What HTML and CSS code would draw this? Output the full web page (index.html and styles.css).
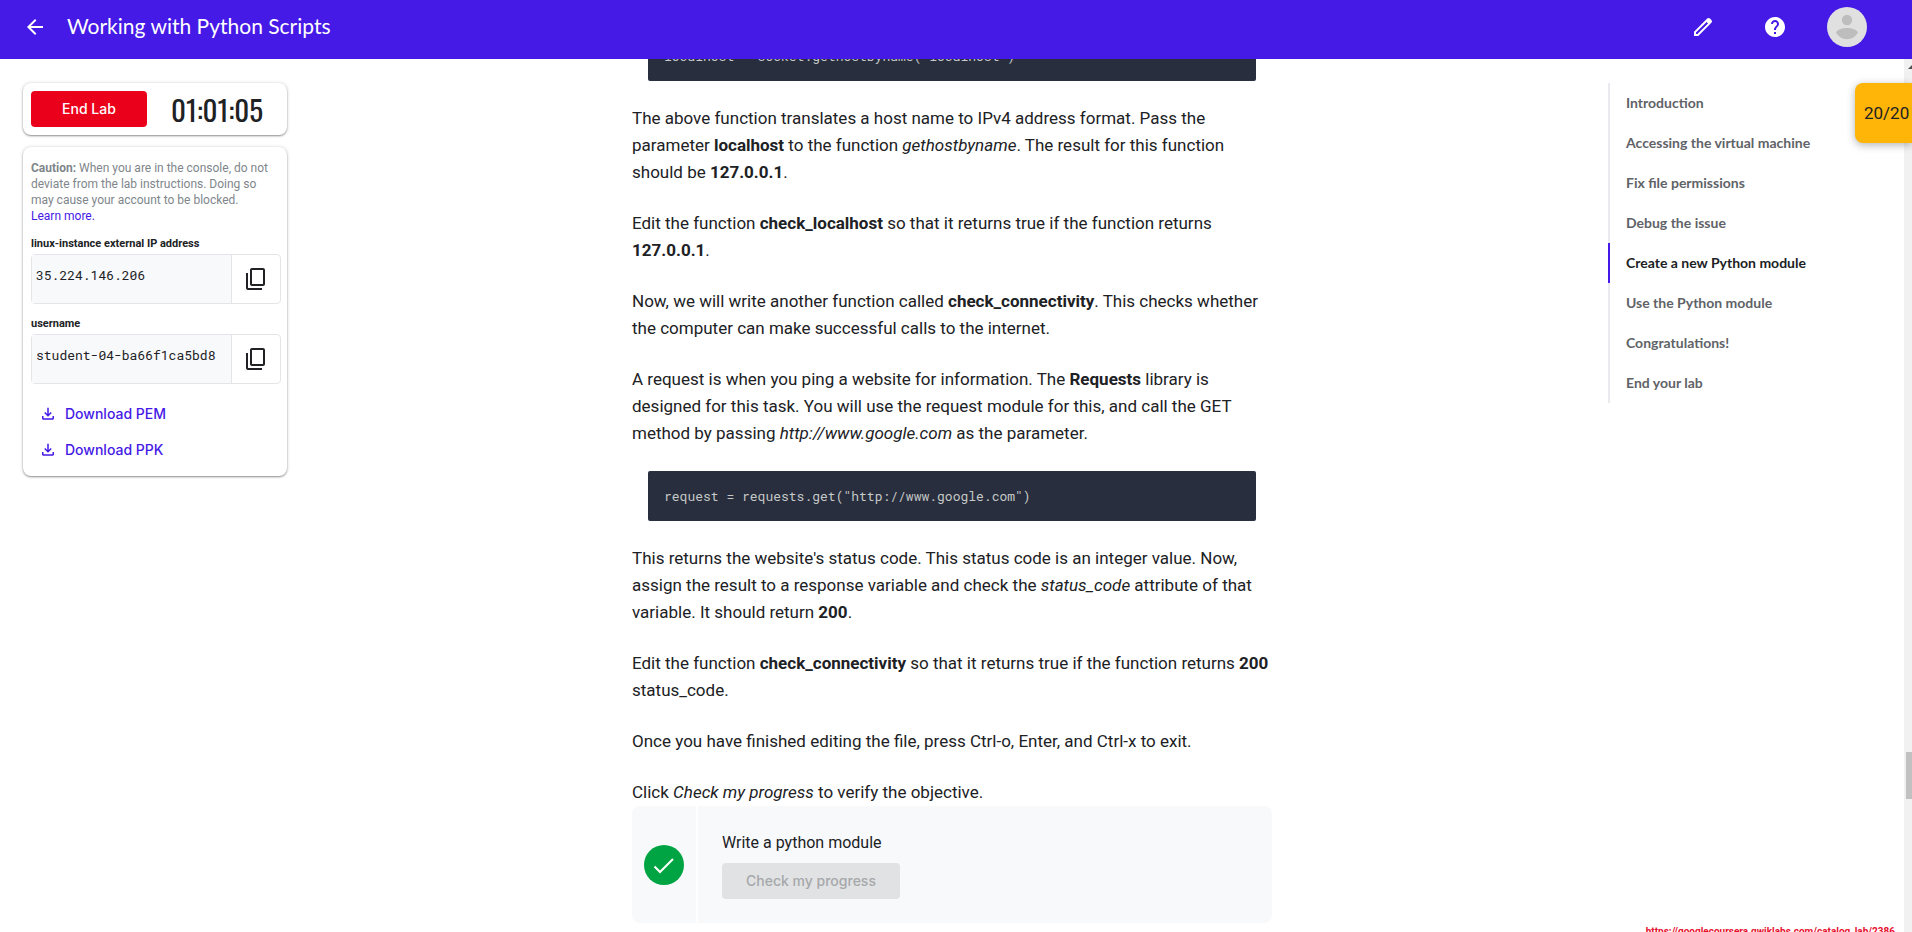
FILE: index.html
```html
<!DOCTYPE html>
<html lang="en">
<head>
<meta charset="utf-8">
<title>Working with Python Scripts</title>
<link rel="stylesheet" href="styles.css">
</head>
<body>
<header class="topbar">
  <button class="icon-button" aria-label="Back">
    <svg width="24" height="24" viewBox="0 0 24 24"><path fill="currentColor" d="M20 11H7.830l5.590-5.590L12 4l-8 8 8 8 1.410-1.410L7.830 13H20v-2z"/></svg>
  </button>
  <h1 class="title">Working with Python Scripts</h1>
  <div class="actions">
    <button class="icon-button" aria-label="Edit">
      <svg width="24" height="24" viewBox="0 0 24 24"><path fill="currentColor" fill-rule="evenodd" d="M3 21v-4.300L16.200 3.600a2 2 0 0 1 2.800 0l1.400 1.400a2 2 0 0 1 0 2.800L7.300 21zM5 19h1.400L17 8.400 15.600 7 5 17.600z"/></svg>
    </button>
    <button class="icon-button" aria-label="Help">
      <svg width="24" height="24" viewBox="0 0 24 24"><path fill="currentColor" d="M12 2C6.480 2 2 6.480 2 12s4.480 10 10 10 10-4.480 10-10S17.520 2 12 2zm1 17h-2v-2h2v2zm2.070-7.750l-.9.920C13.450 12.900 13 13.500 13 15h-2v-.5c0-1.100.450-2.100 1.170-2.830l1.240-1.260c.370-.360.590-.860.590-1.410 0-1.100-.9-2-2-2s-2 .9-2 2H8c0-2.210 1.790-4 4-4s4 1.790 4 4c0 .880-.360 1.680-.930 2.250z"/></svg>
    </button>
    <button class="icon-button" aria-label="Account">
      <svg width="40" height="40" viewBox="0 0 40 40"><circle cx="20" cy="20" r="20" fill="#e0e0e0"/><circle cx="20" cy="13" r="5.200" fill="#bdbdbd"/><path fill="#bdbdbd" d="M9 25.500c2-3.500 7-4.500 11-4.500s9 1 11 4.500c-2.500 4.300-6.500 6.700-11 6.700s-8.500-2.400-11-6.700z"/></svg>
    </button>
  </div>
</header>
<div class="page">
  <main class="layout">
    <aside class="side">
      <section class="card timer-card">
        <button class="end-button">End Lab</button>
        <time class="timer">01:01:05</time>
      </section>
      <section class="card panel">
        <p class="caution"><b>Caution:</b> When you are in the console, do not deviate from the lab instructions. Doing so may cause your account to be blocked. <a href="#">Learn more.</a></p>
        <label class="field-label" for="ip">linux-instance external IP address</label>
        <div class="field">
          <input class="field-value" id="ip" value="35.224.146.206" readonly>
          <button class="copy" aria-label="Copy IP address"><svg width="24" height="24" viewBox="0 0 24 24"><path fill="currentColor" d="M3 6H1v15c0 1.100.9 2 2 2h14v-2H3V6zM18 1H7c-1.100 0-2 .9-2 2v14c0 1.100.9 2 2 2h11c1.100 0 2-.9 2-2V3c0-1.100-.9-2-2-2zm0 16H7V3h11v14z"/></svg></button>
        </div>
        <label class="field-label" for="user">username</label>
        <div class="field">
          <input class="field-value" id="user" value="student-04-ba66f1ca5bd8" readonly>
          <button class="copy" aria-label="Copy username"><svg width="24" height="24" viewBox="0 0 24 24"><path fill="currentColor" d="M3 6H1v15c0 1.100.9 2 2 2h14v-2H3V6zM18 1H7c-1.100 0-2 .9-2 2v14c0 1.100.9 2 2 2h11c1.100 0 2-.9 2-2V3c0-1.100-.9-2-2-2zm0 16H7V3h11v14z"/></svg></button>
        </div>
        <div class="downloads">
          <a class="download" href="#"><svg width="18" height="18" viewBox="0 0 24 24"><path fill="currentColor" d="M18 16v3H6v-3H4v3c0 1.100.9 2 2 2h12c1.100 0 2-.9 2-2v-3h-2zm-1-4l-1.410-1.410L13 13.170V5h-2v8.170L8.410 10.590 7 12l5 5 5-5z"/></svg>Download PEM</a>
          <a class="download" href="#"><svg width="18" height="18" viewBox="0 0 24 24"><path fill="currentColor" d="M18 16v3H6v-3H4v3c0 1.100.9 2 2 2h12c1.100 0 2-.9 2-2v-3h-2zm-1-4l-1.410-1.410L13 13.170V5h-2v8.170L8.410 10.590 7 12l5 5 5-5z"/></svg>Download PPK</a>
        </div>
      </section>
    </aside>
    <article class="lesson">
      <pre class="code"><code>localhost = socket.gethostbyname('localhost')</code></pre>
      <p>The above function translates a host name to IPv4 address format. Pass the parameter <b>localhost</b> to the function <em>gethostbyname</em>. The result for this function should be <b>127.0.0.1</b>.</p>
      <p>Edit the function <b>check_localhost</b> so that it returns true if the function returns <b>127.0.0.1</b>.</p>
      <p>Now, we will write another function called <b>check_connectivity</b>. This checks whether the computer can make successful calls to the internet.</p>
      <p>A request is when you ping a website for information. The <b>Requests</b> library is designed for this task. You will use the request module for this, and call the GET method by passing <em>http://www.google.com</em> as the parameter.</p>
      <pre class="code"><code>request = requests.get("http://www.google.com")</code></pre>
      <p>This returns the website's status code. This status code is an integer value. Now, assign the result to a response variable and check the <em>status_code</em> attribute of that variable. It should return <b>200</b>.</p>
      <p>Edit the function <b>check_connectivity</b> so that it returns true if the function returns <b>200</b> status_code.</p>
      <p>Once you have finished editing the file, press Ctrl-o, Enter, and Ctrl-x to exit.</p>
      <p>Click <em>Check my progress</em> to verify the objective.</p>
      <section class="progress">
        <div class="progress-state">
          <svg width="40" height="40" viewBox="0 0 40 40"><circle cx="20" cy="20" r="20" fill="#00a443"/><path d="M10.500 21.500l5.500 5.500 13-13" fill="none" stroke="#fff" stroke-width="2"/></svg>
        </div>
        <div class="progress-body">
          <span>Write a python module</span>
          <button class="check-button" disabled>Check my progress</button>
        </div>
      </section>
    </article>
    <nav class="outline">
      <a href="#">Introduction</a>
      <a href="#">Accessing the virtual machine</a>
      <a href="#">Fix file permissions</a>
      <a href="#">Debug the issue</a>
      <a href="#" class="active">Create a new Python module</a>
      <a href="#">Use the Python module</a>
      <a href="#">Congratulations!</a>
      <a href="#">End your lab</a>
    </nav>
  </main>
  <div class="scrollbar">
    <svg width="8" height="16" viewBox="0 0 8 16"><path d="M4 10l4-4v4z" fill="#505050"/></svg>
    <div class="thumb"></div>
  </div>
  <div class="score">20/20</div>
  <a class="source" href="#">https://googlecoursera.qwiklabs.com/catalog_lab/2386</a>
</div>
</body>
</html>
```
FILE: styles.css
```css
* { box-sizing: border-box; }

body {
  display: flex;
  flex-direction: column;
  height: 100vh;
  margin: 0;
  overflow: hidden;
  background: #fff;
  color: #202124;
  font-family: Roboto, "Liberation Sans", sans-serif;
}

button { border: 0; font: inherit; }
a { text-decoration: none; }
svg { display: block; }

.topbar {
  display: flex;
  flex: none;
  align-items: flex-start;
  z-index: 1;
  height: 59px;
  padding: 7px 45px 0 15px;
  background: #4519e6;
  color: #fff;
}
.icon-button {
  display: flex;
  align-items: center;
  justify-content: center;
  width: 40px;
  height: 40px;
  padding: 0;
  background: none;
  color: inherit;
}
.title {
  margin: 0 0 0 12px;
  font: 400 21px/38px Lato, sans-serif;
}
.actions { display: flex; gap: 32px; margin-left: auto; }

.page {
  position: relative;
  display: flex;
  flex: 1;
  min-height: 0;
  overflow: hidden;
}
.layout {
  display: grid;
  flex: 1;
  grid-template-columns: 1fr 640px 1fr;
  align-items: start;
}

.side {
  display: grid;
  gap: 12px;
  width: 264px;
  margin: 24px 0 0 23px;
}
.card {
  padding: 8px;
  border-radius: 8px;
  background: #fff;
  box-shadow: 0 1px 2px rgba(0, 0, 0, .4), 0 0 4px rgba(0, 0, 0, .12);
}
.timer-card { display: flex; }
.end-button {
  width: 116px;
  height: 36px;
  padding: 0 0 2px;
  border-radius: 4px;
  background: #eb001b;
  color: #fff;
  font: 500 14px Inter, sans-serif;
}
.timer {
  flex: 1;
  padding-left: 8px;
  font: 400 29px/36px Oswald, "Roboto Condensed", "Liberation Sans Narrow", sans-serif;
  text-align: center;
}
.panel { padding: 13px 6px 9px 8px; }
.caution {
  margin: 0 0 10px;
  color: #80868b;
  font-size: 12px;
  line-height: 16px;
}
.caution a { display: block; color: #4519e6; }
.field-label {
  display: block;
  font-size: 11px;
  font-weight: 700;
  line-height: 20px;
}
.field {
  display: flex;
  height: 50px;
  margin-bottom: 10px;
  border: 1px solid #e3e5e9;
  border-radius: 4px;
}
.field-value {
  flex: 1;
  min-width: 0;
  padding: 0 0 8px 4px;
  border: 0;
  border-right: 1px solid #e3e5e9;
  background: #f8f9fb;
  color: #202124;
  font: 13px "Roboto Mono", "Liberation Mono", monospace;
}
.copy {
  display: grid;
  place-items: center;
  width: 48px;
  padding: 0 0 0 2px;
  background: none;
  color: #202124;
}
.downloads { display: grid; margin-top: 11px; }
.download {
  display: flex;
  align-items: center;
  gap: 8px;
  height: 36px;
  padding-left: 8px;
  color: #4519e6;
  font: 500 14px Inter, sans-serif;
}

.lesson { font-size: 17px; line-height: 27px; }
.lesson p { margin: 24px 0; }
.code {
  height: 50px;
  margin: 24px 16px;
  padding: 0 16px;
  border-radius: 2px;
  background: #282e3e;
  color: #c5c8c6;
  font: 13px/50px "Roboto Mono", "Liberation Mono", monospace;
}
.code:first-child { margin-top: -28px; }
.code code { font: inherit; }
.lesson p:has(+ .progress) { margin-bottom: 0; }
.progress {
  display: flex;
  gap: 2px;
  height: 117px;
  border-radius: 8px;
  overflow: hidden;
}
.progress-state {
  display: grid;
  place-items: center;
  width: 64px;
  background: #f8f9fb;
}
.progress-body {
  display: flex;
  flex: 1;
  flex-direction: column;
  align-items: flex-start;
  gap: 7px;
  padding: 23px 24px;
  background: #f8f9fb;
  font-size: 16px;
}
.check-button {
  height: 36px;
  padding: 0 24px 2px;
  border-radius: 4px;
  background: #e1e2e4;
  color: #a6a8ab;
  font: 500 14px Inter, sans-serif;
}

.outline {
  display: grid;
  justify-self: end;
  width: 296px;
  margin-top: 24px;
}
.outline a {
  padding-left: 16px;
  border-left: 2px solid #e8eaf0;
  color: #5f6368;
  font: 700 14px/40px Lato, sans-serif;
}
.outline .active { border-color: #4519e6; color: #202124; }

.scrollbar { display: flex; flex-direction: column; width: 8px; background: #f1f1f1; }
.thumb { width: 6px; height: 47px; margin: 677px 0 0 2px; background: #c1c1c1; }
.score {
  position: absolute;
  top: 24px;
  right: 0;
  width: 57px;
  padding-left: 9px;
  border-radius: 8px 0 0 8px;
  background: #ffb507;
  box-shadow: 0 2px 8px rgba(0, 0, 0, .3);
  font-size: 17px;
  line-height: 60px;
}
.source {
  position: absolute;
  right: 17px;
  bottom: -7px;
  color: #e8102f;
  font-size: 10px;
  font-weight: 700;
  line-height: 14px;
}
```
